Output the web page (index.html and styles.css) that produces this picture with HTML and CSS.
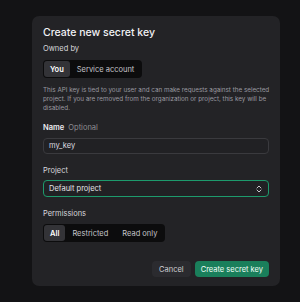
FILE: index.html
```html
<!DOCTYPE html>
<html lang="en">
<head>
  <meta charset="UTF-8">
  <title>Create new secret key</title>
  <link rel="stylesheet" href="styles.css">
</head>
<body>

<div class="modal">
  <h1 class="title">Create new secret key</h1>

  <div class="label">Owned by</div>
  <div class="segmented">
    <button class="seg active">You</button>
    <button class="seg">Service account</button>
  </div>

  <p class="desc">This API key is tied to your user and can make requests against the selected project. If you are removed from the organization or project, this key will be disabled.</p>

  <div class="label label-name"><b>Name</b> <span class="optional">Optional</span></div>
  <div class="input">my_key</div>

  <div class="label label-gap">Project</div>
  <div class="select">
    <span>Default project</span>
    <svg class="chevrons" width="6" height="8" viewBox="0 0 6 8" fill="none" stroke="#c8c8cc" stroke-width="1" stroke-linecap="round" stroke-linejoin="round">
      <path d="M1 3 L3 1 L5 3"/>
      <path d="M1 5 L3 7 L5 5"/>
    </svg>
  </div>

  <div class="label label-gap">Permissions</div>
  <div class="segmented seg-perm">
    <button class="seg active">All</button>
    <button class="seg">Restricted</button>
    <button class="seg">Read only</button>
  </div>

  <div class="actions">
    <button class="btn btn-cancel">Cancel</button>
    <button class="btn btn-primary">Create secret key</button>
  </div>
</div>

</body>
</html>
```

FILE: styles.css
```css
body { margin: 0; background: #131315; font-family: Inter, "Noto Sans", sans-serif; color: #ececf1; padding-top: 16px; }
.modal { margin-left: 32px; width: 248px; height: 270px; box-sizing: border-box; background: #232326; border-radius: 7px; padding: 10px 11px 0; }
.title { margin: 0; font-size: 10.5px; line-height: 14px; font-weight: 500; color: #f2f2f5; }
.label { margin-top: 4px; font-size: 7.5px; line-height: 10px; color: #d8d8dc; }
.label b { font-weight: 600; color: #ececf1; }
.label-name { margin-top: 10px; }
.label-gap { margin-top: 12px; }
.optional { color: #8e8e93; margin-left: 2px; }
.segmented { display: inline-flex; margin-top: 6px; height: 18px; box-sizing: border-box; padding: 1px; background: #0c0c0d; border-radius: 4px; }
.seg { font-family: inherit; font-size: 7.5px; color: #c5c5ca; background: none; border: none; padding: 0 7px; border-radius: 3px; cursor: pointer; }
.seg.active { background: #333337; color: #fff; font-weight: 600; padding: 0 6px; }
.desc { margin: 8px -4px 0 0; font-size: 6.3px; line-height: 9px; color: #9a9aa0; }
.input { margin-top: 5px; height: 16px; box-sizing: border-box; border: 1px solid #3a3a3e; border-radius: 4px; background: #212124; padding: 0 5px; font-size: 7.5px; line-height: 14px; color: #dcdce0; }
.select { margin-top: 4px; height: 17px; box-sizing: border-box; border: 1px solid #1d9a6c; border-radius: 4px; background: #212124; padding: 0 5px; font-size: 7.5px; display: flex; align-items: center; justify-content: space-between; color: #e4e4e8; }
.chevrons { margin-right: 1px; }
.seg-perm { margin-top: 5px; }
.actions { display: flex; justify-content: flex-end; gap: 4px; margin-top: 19px; }
.btn { font-family: inherit; font-size: 7.5px; height: 16px; border: none; border-radius: 4px; padding: 0 7px; cursor: pointer; }
.btn-cancel { background: #2b2b2f; color: #d0d0d4; }
.btn-primary { background: #1a7f5b; color: #f2fff9; padding: 0 6px; }
```
